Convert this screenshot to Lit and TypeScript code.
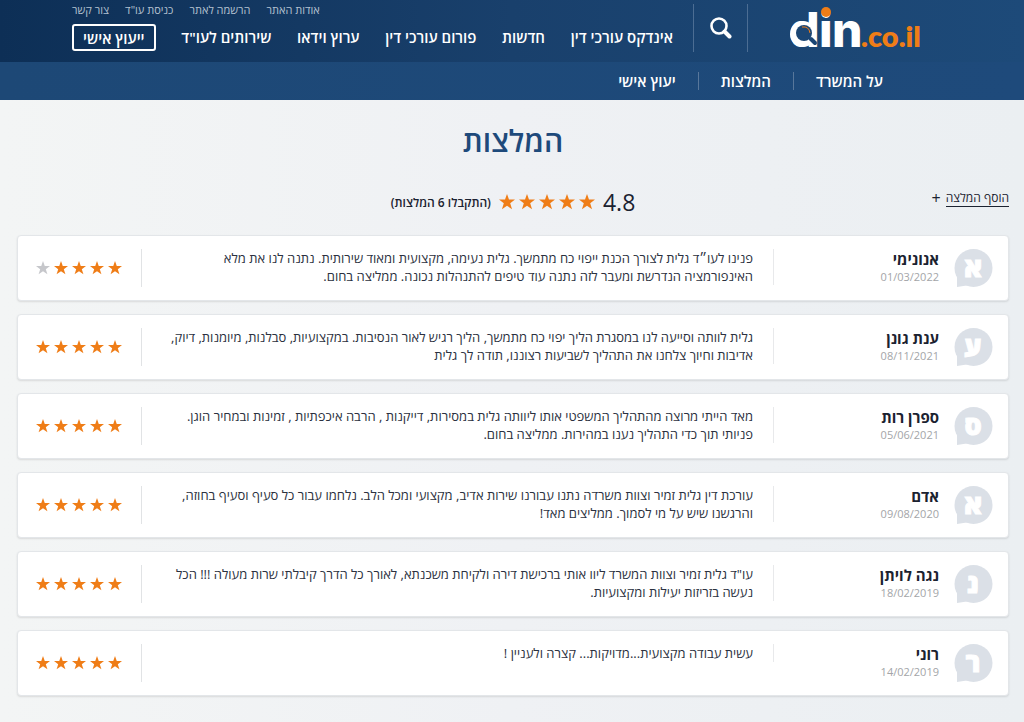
import { LitElement, html, css } from "lit";
import { customElement, property } from "lit/decorators.js";

interface Review {
  initial: string;
  name: string;
  date: string;
  text: string;
  stars: number;
}

const REVIEWS: Review[] = [
  { initial: "א", name: "אנונימי", date: "01/03/2022", stars: 4, text: "פנינו לעו״ד גלית לצורך הכנת ייפוי כח מתמשך. גלית נעימה, מקצועית ומאוד שירותית. נתנה לנו את מלא האינפורמציה הנדרשת ומעבר לזה נתנה עוד טיפים להתנהלות נכונה. ממליצה בחום." },
  { initial: "ע", name: "ענת גונן", date: "08/11/2021", stars: 5, text: "גלית לוותה וסייעה לנו במסגרת הליך יפוי כח מתמשך, הליך רגיש לאור הנסיבות. במקצועיות, סבלנות, מיומנות, דיוק, אדיבות וחיוך צלחנו את התהליך לשביעות רצוננו, תודה לך גלית" },
  { initial: "ס", name: "ספרן רות", date: "05/06/2021", stars: 5, text: "מאד הייתי מרוצה מהתהליך המשפטי אותו ליוותה גלית במסירות, דייקנות , הרבה איכפתיות , זמינות ובמחיר הוגן.\nפניותי תוך כדי התהליך נענו במהירות. ממליצה בחום." },
  { initial: "א", name: "אדם", date: "09/08/2020", stars: 5, text: "עורכת דין גלית זמיר וצוות משרדה נתנו עבורנו שירות אדיב, מקצועי ומכל הלב. נלחמו עבור כל סעיף וסעיף בחוזה, והרגשנו שיש על מי לסמוך. ממליצים מאד!" },
  { initial: "נ", name: "נגה לויתן", date: "18/02/2019", stars: 5, text: "עו\"ד גלית זמיר וצוות המשרד ליוו אותי ברכישת דירה ולקיחת משכנתא, לאורך כל הדרך קיבלתי שרות מעולה !!! הכל נעשה בזריזות יעילות ומקצועיות." },
  { initial: "ר", name: "רוני", date: "14/02/2019", stars: 5, text: "עשית עבודה מקצועית...מדויקות... קצרה ולעניין !" },
];

const TOP_LINKS = ["אודות האתר", "הרשמה לאתר", "כניסת עו\"ד", "צור קשר"];
const MAIN_LINKS = ["אינדקס עורכי דין", "חדשות", "פורום עורכי דין", "ערוץ וידאו", "שירותים לעו\"ד"];
const SUB_LINKS = ["על המשרד", "המלצות", "יעוץ אישי"];

@customElement("star-row")
class StarRow extends LitElement {
  @property({ type: Number }) value = 5;
  @property({ type: Number }) size = 14;

  static styles = css`
    :host { display: flex; direction: rtl; gap: 4px; }
    svg { display: block; fill: #ef7d17; }
    .off { fill: #c6c7cb; }
  `;

  render() {
    return [1, 2, 3, 4, 5].map(
      (n) => html`<svg class=${n > this.value ? "off" : "on"} width=${this.size} height=${this.size} viewBox="0 0 20 20" aria-hidden="true">
        <path d="M10 0 12.5 7H20L14 11.7 16.3 19 10 14.6 3.7 19 6 11.7 0 7H7.5Z" />
      </svg>`
    );
  }
}

@customElement("site-header")
class SiteHeader extends LitElement {
  static styles = css`
    :host { display: block; color: #fff; }
    a { color: inherit; text-decoration: none; white-space: nowrap; }
    .bar {
      display: flex;
      height: 62px;
      box-sizing: border-box;
      padding: 0 104px 0 72px;
      background: linear-gradient(to right, #0d2f56, #19406c 50%, #1d4a79);
    }
    .logo { display: block; width: 130px; height: 62px; margin-left: 42px; }
    .logo svg { display: block; }
    .search {
      width: 55px;
      height: 48px;
      margin: 4px 0 0;
      padding: 0;
      border: solid #4c6d93;
      border-width: 0 1px;
      background: none;
      display: grid;
      place-items: center;
    }
    .menus { flex: 1; display: flex; flex-direction: column; padding-right: 20px; }
    .top { display: flex; justify-content: flex-end; gap: 16px; height: 20px; font-size: 11px; line-height: 20px; color: #b4c1d0; }
    .main { display: flex; justify-content: space-between; align-items: center; height: 34px; font-size: 15px; font-weight: 600; }
    .advice { box-sizing: border-box; border: 2px solid #fff; border-radius: 3px; height: 27px; line-height: 24px; padding: 0 9px; }
    .sub {
      display: flex;
      align-items: center;
      height: 38px;
      padding: 0 119px;
      background: linear-gradient(to right, #1d4876, #1e4a7b);
      font-size: 15px;
      font-weight: 600;
    }
    .sub a { line-height: 18px; padding: 0 22px; }
    .sub a + a { border-right: 1px solid #58779b; }
  `;

  render() {
    return html`
      <header>
        <div class="bar">
          <a class="logo" href="#" aria-label="din.co.il">
            <svg width="130" height="62" viewBox="0 0 130 62" direction="ltr" font-weight="800">
              <g fill="#fff" font-size="48" font-family="Inter">
                <text x="-1" y="47">d</text>
                <text x="29" y="47">i</text>
                <text x="42" y="47">n</text>
              </g>
              <circle cx="36" cy="12" r="5" fill="#ef7d17" />
              <circle cx="13" cy="34" r="13" fill="#fff" />
              <circle cx="14" cy="33" r="8" fill="#1b4674" />
              <path d="M19 38l2 2" stroke="#1b4674" stroke-width="2" />
              <path d="M21 39l4 4" stroke="#1b4674" stroke-width="4" stroke-linecap="round" />
              <path d="M12 27q7-1 8 6" stroke="#ef7d17" fill="none" />
              <text x="71" y="47" font-size="29" font-family="Lato" fill="#ef7d17">.co.il</text>
            </svg>
          </a>
          <button class="search" aria-label="חיפוש">
            <svg width="22" height="22" viewBox="0 0 22 22" fill="none" stroke="#fff">
              <circle cx="9" cy="9" r="7.5" stroke-width="2.6" />
              <path d="M14.5 14.5l5 5" stroke-width="4" stroke-linecap="round" />
            </svg>
          </button>
          <div class="menus">
            <nav class="top">${TOP_LINKS.map((t) => html`<a href="#">${t}</a>`)}</nav>
            <nav class="main">
              ${MAIN_LINKS.map((t) => html`<a href="#">${t}</a>`)}
              <a class="advice" href="#">ייעוץ אישי</a>
            </nav>
          </div>
        </div>
        <nav class="sub">${SUB_LINKS.map((t) => html`<a href="#">${t}</a>`)}</nav>
      </header>
    `;
  }
}

@customElement("review-card")
class ReviewCard extends LitElement {
  @property({ attribute: false }) review!: Review;

  static styles = css`
    :host { display: block; }
    .card {
      display: flex;
      align-items: flex-start;
      padding: 13px 15px 11px 18px;
      background: #fff;
      border: 1px solid #e3e6e9;
      border-radius: 4px;
      box-shadow: 0 1px 2px #0000001c;
    }
    .avatar { flex: none; width: 40px; height: 40px; }
    .initial { font-size: 27px; font-weight: 800; fill: #fff; stroke: #fff; text-anchor: middle; }
    .author { flex: none; width: 179px; box-sizing: border-box; padding-right: 14px; }
    h2 { margin: 1px 0 0; font-size: 15px; line-height: 18px; font-weight: 700; color: #1b2230; }
    time { display: block; font-size: 11px; line-height: 18px; color: #a3a5a8; }
    p { flex: 1; margin: 0; padding: 0 20px; border-right: 1px solid #e8e9eb; font-size: 13px; line-height: 18px; color: #2b3140; white-space: pre-line; }
    .rating { flex: none; display: flex; align-items: center; height: 38px; padding-right: 19px; border-right: 1px solid #e1e3e5; }
  `;

  render() {
    const r = this.review;
    return html`
      <article class="card">
        <svg class="avatar" viewBox="0 0 40 40" aria-hidden="true">
          <circle cx="20.5" cy="19" r="19" fill="#dbe0e7" />
          <path d="M4 26 4 38 17 36Z" fill="#dbe0e7" />
          <text class="initial" x="20" y="28">${r.initial}</text>
        </svg>
        <div class="author"><h2>${r.name}</h2><time>${r.date}</time></div>
        <p>${r.text}</p>
        <div class="rating"><star-row .value=${r.stars} role="img" aria-label="${r.stars} / 5"></star-row></div>
      </article>
    `;
  }
}

@customElement("app-root")
class AppRoot extends LitElement {
  static styles = css`
    :host {
      display: block;
      min-height: 100vh;
      direction: rtl;
      font-family: "Open Sans", "Liberation Sans", sans-serif;
      background: linear-gradient(to right, #f3f5f5, #eff1f4 50%, #ebeff2);
    }
    main { padding: 0 15px 24px 17px; }
    h1 { margin: 0; padding: 21px 0 19px; font-size: 30px; line-height: 40px; font-weight: 600; text-align: center; color: #1e4a7b; }
    .summary { display: grid; grid-template-columns: 1fr auto 1fr; align-items: center; height: 44px; color: #1b2230; }
    .add { display: flex; gap: 5px; align-self: start; justify-self: start; padding-top: 10px; font-size: 12px; line-height: 16px; color: #1b2230; text-decoration: none; }
    .add .label { border-bottom: 1px solid #1b2230; }
    .plus { font-size: 16px; font-weight: 500; }
    .score { display: flex; align-items: center; gap: 8px; }
    .value { font-size: 23px; }
    .count { font-size: 12px; font-weight: 600; }
    .list { display: flex; flex-direction: column; gap: 13px; margin: 11px 0 0; padding: 0; list-style: none; }
  `;

  render() {
    return html`
      <site-header></site-header>
      <main>
        <h1>המלצות</h1>
        <div class="summary">
          <a class="add" href="#"><span class="label">הוסף המלצה</span><span class="plus">+</span></a>
          <div class="score">
            <span class="value">4.8</span>
            <star-row .size=${16} role="img" aria-label="4.8 / 5"></star-row>
            <span class="count">(התקבלו 6 המלצות)</span>
          </div>
        </div>
        <ul class="list">${REVIEWS.map((r) => html`<li><review-card .review=${r}></review-card></li>`)}</ul>
      </main>
    `;
  }
}
